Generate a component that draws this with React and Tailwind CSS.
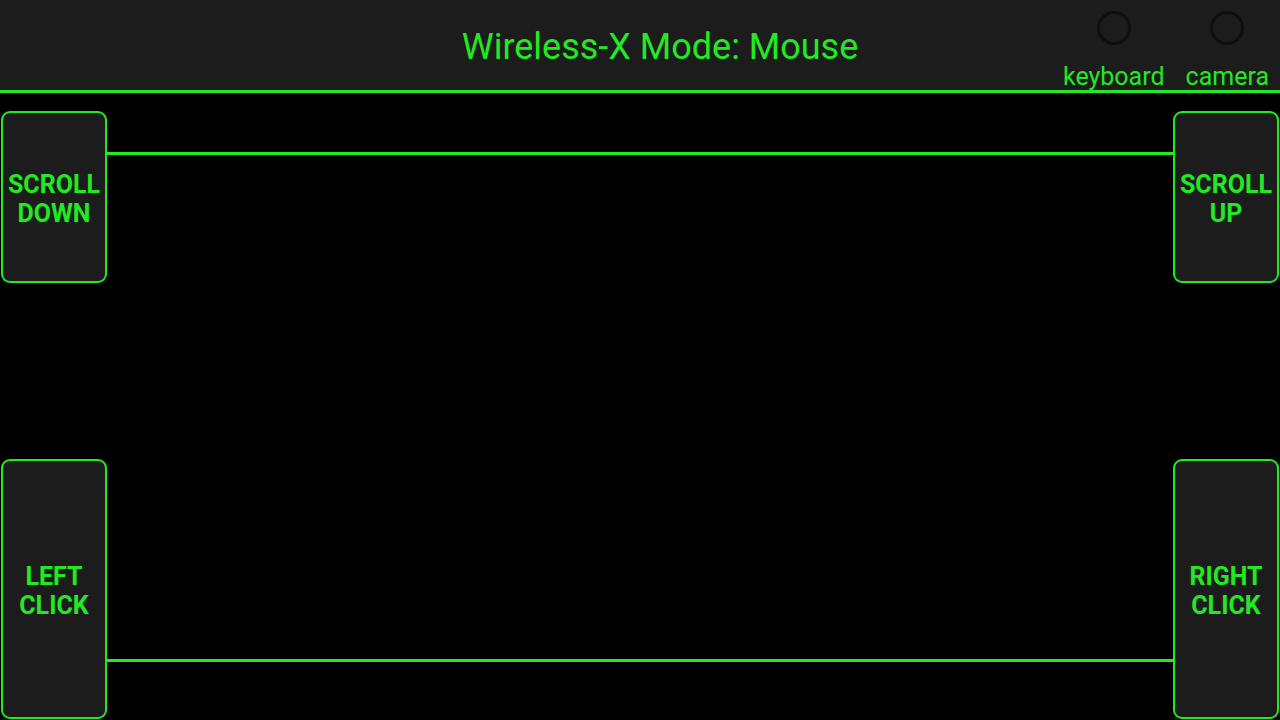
export default function App() {
  const green = "text-[#22ea22]";
  const Btn = ({ lines, h }) => (
    <div
      className={`w-[106px] ${h} shrink-0 rounded-[9px] border-2 border-[#22ea22] bg-[#1c1c1c] flex flex-col items-center justify-center pt-[4px]`}
    >
      {lines.map((l) => (
        <span key={l} className={`${green} font-bold text-[25px] leading-[29px]`}>
          {l}
        </span>
      ))}
    </div>
  );
  const Toggle = ({ label }) => (
    <div className="flex flex-col items-center">
      <div className="w-[34px] h-[34px] rounded-full border-[3px] border-[#0f0f0f] mt-[11px]" />
      <span className={`${green} text-[25px] leading-[28px] mt-[18px]`}>{label}</span>
    </div>
  );
  return (
    <div
      className="w-[1280px] h-[720px] overflow-hidden bg-black flex flex-col"
      style={{ fontFamily: "Roboto, 'Liberation Sans', sans-serif" }}
    >
      <div className="h-[93px] shrink-0 bg-[#1c1c1c] border-b-[3px] border-[#22ea22] flex items-start relative">
        <div className="flex-1 flex justify-center pl-[40px] pt-[25px]">
          <span className={`${green} text-[36px] leading-[44px]`}>Wireless-X Mode: Mouse</span>
        </div>
        <div className="absolute right-[11px] top-0 flex gap-[21px]">
          <Toggle label="keyboard" />
          <Toggle label="camera" />
        </div>
      </div>
      <div className="flex-1 flex px-[1px] pt-[18px]">
        <div className="flex flex-col gap-[176px]">
          <Btn lines={["SCROLL", "DOWN"]} h="h-[172px]" />
          <Btn lines={["LEFT", "CLICK"]} h="h-[260px]" />
        </div>
        <div className="flex-1 flex flex-col">
          <div className="h-[3px] bg-[#22ea22] mt-[41px]" />
          <div className="h-[3px] bg-[#22ea22] mt-[504px]" />
        </div>
        <div className="flex flex-col gap-[176px]">
          <Btn lines={["SCROLL", "UP"]} h="h-[172px]" />
          <Btn lines={["RIGHT", "CLICK"]} h="h-[260px]" />
        </div>
      </div>
    </div>
  );
}
